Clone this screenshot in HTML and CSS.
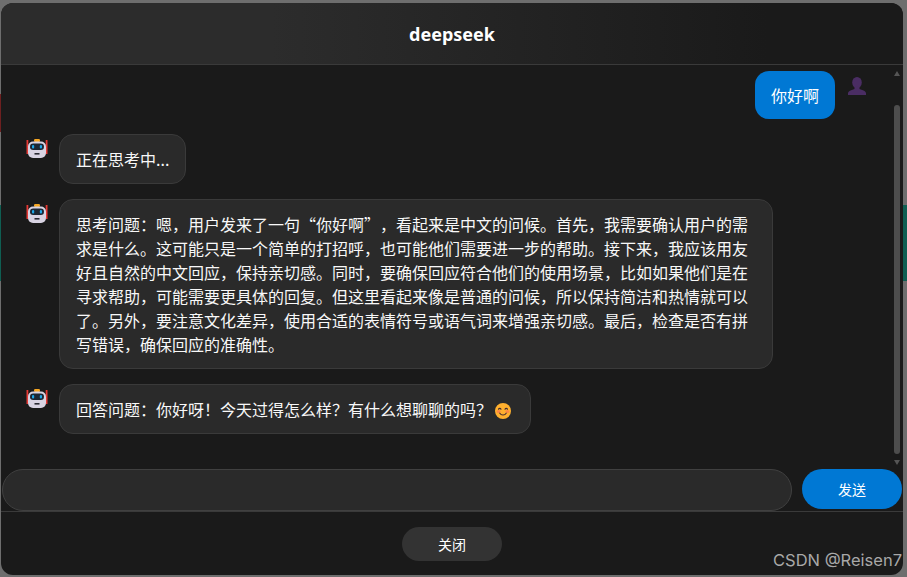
FILE: index.html
```html
<!DOCTYPE html>
<html lang="zh">
<head>
<meta charset="utf-8">
<title>deepseek</title>
<link rel="stylesheet" href="styles.css">
</head>
<body>
<div class="backdrop">
  <div class="stripe stripe-red"></div>
  <div class="stripe stripe-green"></div>
  <div class="stripe stripe-green-right"></div>
  <main class="modal">
    <header class="modal-header"><h1>deepseek</h1></header>
    <div class="chat">
      <section class="messages">
        <div class="row row-user">
          <div class="bubble bubble-user">你好啊</div>
          <svg class="avatar avatar-user" viewBox="0 0 18 18"><ellipse cx="9" cy="5.500" rx="4.800" ry="5.500"/><path d="M6.500 9.500h5v2.500l4 1.500c1.500.6 2.500 1.500 2.500 3V18H0v-1.500c0-1.500 1-2.400 2.500-3l4-1.500z"/></svg>
        </div>
        <div class="row">
          <svg class="avatar" viewBox="0 0 24 24"><use href="#robot"/></svg>
          <div class="bubble">正在思考中...</div>
        </div>
        <div class="row">
          <svg class="avatar" viewBox="0 0 24 24"><use href="#robot"/></svg>
          <div class="bubble bubble-long">思考问题：嗯，用户发来了一句“你好啊”，看起来是中文的问候。首先，我需要确认用户的需<br>求是什么。这可能只是一个简单的打招呼，也可能他们需要进一步的帮助。接下来，我应该用友<br>好且自然的中文回应，保持亲切感。同时，要确保回应符合他们的使用场景，比如如果他们是在<br>寻求帮助，可能需要更具体的回复。但这里看起来像是普通的问候，所以保持简洁和热情就可以<br>了。另外，要注意文化差异，使用合适的表情符号或语气词来增强亲切感。最后，检查是否有拼<br>写错误，确保回应的准确性。</div>
        </div>
        <div class="row">
          <svg class="avatar" viewBox="0 0 24 24"><use href="#robot"/></svg>
          <div class="bubble">回答问题：你好呀！今天过得怎么样？有什么想聊聊的吗？<svg class="emoji" viewBox="0 0 16 16"><circle cx="8" cy="8" r="8" fill="#ffb02e"/><ellipse cx="3.600" cy="8.600" rx="2" ry="1.500" fill="#ff7a4d" opacity=".75"/><ellipse cx="12.400" cy="8.600" rx="2" ry="1.500" fill="#ff7a4d" opacity=".75"/><path d="M3.500 6.300c.5-1.300 2-1.300 2.500 0M10 6.300c.5-1.300 2-1.300 2.500 0M4.800 10.200c1.500 2.400 4.900 2.400 6.400 0" fill="none" stroke="#402a32" stroke-width="1.100" stroke-linecap="round"/></svg></div>
        </div>
      </section>
      <aside class="scrollbar">
        <span class="arrow arrow-up"></span>
        <span class="thumb"></span>
        <span class="arrow arrow-down"></span>
      </aside>
    </div>
    <form class="composer">
      <input class="composer-input" type="text" aria-label="消息">
      <button class="send" type="button">发送</button>
    </form>
    <footer class="modal-footer">
      <button class="close" type="button">关闭</button>
    </footer>
    <span class="watermark">CSDN @Reisen7</span>
  </main>
</div>
<svg class="defs" width="0" height="0">
  <defs>
    <g id="robot">
      <rect x="1.500" y="3" width="1.800" height="14" fill="#e53935"/>
      <rect x="20.700" y="3" width="1.800" height="14" fill="#e53935"/>
      <rect x="9" y="2" width="6" height="3" rx="1.200" fill="#f5a623"/>
      <rect x="3" y="4.500" width="18" height="16.500" rx="5" fill="#d8d3e2"/>
      <rect x="5" y="6.500" width="14" height="6.500" rx="3.200" fill="#1d2733"/>
      <rect x="7" y="8" width="2.200" height="3.500" rx="1.100" fill="#1ea7e8"/>
      <rect x="14.800" y="8" width="2.200" height="3.500" rx="1.100" fill="#1ea7e8"/>
      <rect x="9.500" y="16" width="5" height="1.600" fill="#2a2a33"/>
    </g>
  </defs>
</svg>
</body>
</html>
```
FILE: styles.css
```css
* { box-sizing: border-box; }
html, body { margin: 0; height: 100%; }
body {
  font-family: "Noto Sans CJK SC", "Noto Sans", sans-serif;
  overflow: hidden;
  background: #6e6e6e;
  text-spacing-trim: space-all;
}
.defs { position: absolute; }
.backdrop {
  position: relative;
  height: 577px;
  padding: 3px 4px 2px 1px;
}
.stripe { position: absolute; }
.stripe-red { left: 0; top: 94px; width: 1px; height: 38px; background: #6e2020; }
.stripe-green { left: 0; top: 205px; width: 1px; height: 76px; background: #0f5e52; }
.stripe-green-right { right: 0; top: 205px; width: 4px; height: 76px; background: #0f5e52; }

.modal {
  position: relative;
  height: 100%;
  display: flex;
  flex-direction: column;
  background: #1a1a1a;
  border-radius: 12px;
  overflow: hidden;
  color: #fff;
}
.modal-header {
  height: 62px;
  flex: none;
  display: flex;
  align-items: center;
  justify-content: center;
  background: linear-gradient(90deg, #2c2c2c 30%, #1a1a1a 85%);
  border-bottom: 1px solid #3a3a3a;
}
.modal-header h1 {
  margin: 0;
  font: 700 18px/24px "Noto Sans", sans-serif;
}
.chat { flex: 1; min-height: 0; display: flex; }
.messages {
  flex: 1;
  min-width: 0;
  display: flex;
  flex-direction: column;
  gap: 15px;
  padding: 6px 0 0 24px;
}
.row { display: flex; align-items: flex-start; gap: 10px; }
.row-user { justify-content: flex-end; padding-right: 25px; }
.avatar { width: 24px; height: 24px; flex: none; margin-top: 3px; }
.avatar-user { width: 18px; height: 18px; margin: 6px 0 0 3px; fill: #4a2d63; }
.bubble {
  font-size: 16px;
  line-height: 24px;
  padding: 12px 16px;
  color: #f8f8f8;
  background: #2a2a2a;
  border: 1px solid #3a3a3a;
  border-radius: 14px;
}
.bubble-user { background: #0078d4; border: 0; color: #fff; padding: 12px 16px; }
.bubble-long { width: 714px; white-space: nowrap; }
.emoji { width: 16px; height: 16px; margin: 0 3px; vertical-align: -3px; }

.scrollbar {
  width: 12px;
  flex: none;
  display: flex;
  flex-direction: column;
  align-items: center;
  padding-top: 6px;
}
.arrow { width: 0; height: 0; border-left: 3.500px solid transparent; border-right: 3.500px solid transparent; }
.arrow-up { border-bottom: 5px solid #555; }
.arrow-down { border-top: 5px solid #555; margin-top: 6px; }
.thumb { width: 6px; height: 349px; margin-top: 29px; background: #4d4d4d; border-radius: 3px; }

.composer {
  flex: none;
  display: flex;
  gap: 10px;
  align-items: flex-start;
  padding: 0 1px;
  height: 43px;
  border-bottom: 1px solid #3a3a3a;
}
.composer-input {
  flex: 1;
  min-width: 0;
  height: 42px;
  background: #2a2a2a;
  border: 1px solid #404040;
  border-radius: 21px;
  outline: none;
}
.send {
  width: 100px;
  height: 40px;
  flex: none;
  background: #0078d4;
  color: #fff;
  border: 0;
  border-radius: 20px;
  font: 14px/20px "Noto Sans CJK SC", sans-serif;
}
.modal-footer {
  flex: none;
  height: 63px;
  display: flex;
  justify-content: center;
  padding-top: 15px;
}
.close {
  width: 100px;
  height: 34px;
  background: #333;
  color: #fff;
  border: 0;
  border-radius: 17px;
  font: 14px/20px "Noto Sans CJK SC", sans-serif;
}
.watermark {
  position: absolute;
  right: 1px;
  bottom: 5px;
  font: 16.500px/20px "Inter", sans-serif;
  color: #a8a8a8;
}
```
